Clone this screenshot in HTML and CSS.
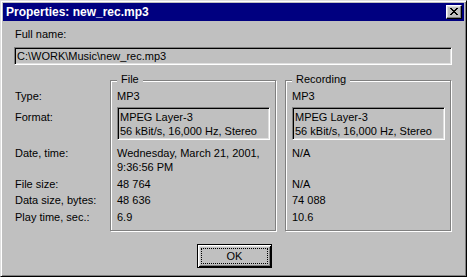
FILE: index.html
```html
<!DOCTYPE html>
<html>
<head>
<meta charset="utf-8">
<link rel="stylesheet" href="styles.css">
</head>
<body>
<div class="window">
  <div class="titlebar">
    <span class="title">Properties: new_rec.mp3</span>
    <button class="close" aria-label="Close">
      <svg class="xglyph" width="8" height="7" viewBox="0 0 8 7" shape-rendering="crispEdges">
        <rect x="0" y="0" width="2" height="1"/><rect x="6" y="0" width="2" height="1"/>
        <rect x="1" y="1" width="2" height="1"/><rect x="5" y="1" width="2" height="1"/>
        <rect x="2" y="2" width="4" height="1"/>
        <rect x="3" y="3" width="2" height="1"/>
        <rect x="2" y="4" width="4" height="1"/>
        <rect x="1" y="5" width="2" height="1"/><rect x="5" y="5" width="2" height="1"/>
        <rect x="0" y="6" width="2" height="1"/><rect x="6" y="6" width="2" height="1"/>
      </svg>
    </button>
  </div>
  <div class="content">
    <div class="fullname-label">Full name:</div>
    <div class="field">C:\WORK\Music\new_rec.mp3</div>
    <div class="form">
      <div class="labels">
        <div class="r-type">Type:</div>
        <div class="r-format lbl-format">Format:</div>
        <div class="r-date">Date, time:</div>
        <div class="r-size">File size:</div>
        <div class="r-data">Data size, bytes:</div>
        <div class="r-play">Play time, sec.:</div>
      </div>
      <div class="group">
        <span class="legend">File</span>
        <div class="r-type">MP3</div>
        <div class="r-format"><div class="box">MPEG Layer-3<br>56 kBit/s, 16,000 Hz, Stereo</div></div>
        <div class="r-date">Wednesday, March 21, 2001,<br>9:36:56 PM</div>
        <div class="r-size">48 764</div>
        <div class="r-data">48 636</div>
        <div class="r-play">6.9</div>
      </div>
      <div class="group">
        <span class="legend">Recording</span>
        <div class="r-type">MP3</div>
        <div class="r-format"><div class="box">MPEG Layer-3<br>56 kBit/s, 16,000 Hz, Stereo</div></div>
        <div class="r-date">N/A</div>
        <div class="r-size">N/A</div>
        <div class="r-data">74 088</div>
        <div class="r-play">10.6</div>
      </div>
    </div>
    <div class="actions">
      <button class="ok"><span class="focus">OK</span></button>
    </div>
  </div>
</div>
</body>
</html>
```

FILE: styles.css
```css
html, body {
  margin: 0;
  padding: 0;
  background: #c0c0c0;
}

.window {
  width: 467px;
  height: 277px;
  box-sizing: border-box;
  background: #c0c0c0;
  border: 1px solid;
  border-color: #dfdfdf #000 #000 #dfdfdf;
  box-shadow: inset 1px 1px 0 #fff, inset -1px -1px 0 #808080;
  padding: 2px;
  display: flex;
  flex-direction: column;
  font-family: "Liberation Sans", Arial, sans-serif;
  font-size: 11px;
  line-height: 14px;
  color: #000;
}

.titlebar {
  height: 18px;
  flex: none;
  background: #000080;
  color: #fff;
  display: flex;
  align-items: center;
  justify-content: space-between;
  padding: 0 2px 0 3px;
}

.title {
  font-weight: bold;
  font-size: 12px;
  line-height: 18px;
  white-space: nowrap;
}

.close {
  width: 16px;
  height: 14px;
  box-sizing: border-box;
  margin: 0;
  padding: 2px 0 0 3px;
  background: #c0c0c0;
  border: 1px solid;
  border-color: #fff #000 #000 #fff;
  box-shadow: inset -1px -1px 0 #808080, inset 1px 1px 0 #dfdfdf;
  display: flex;
  align-items: flex-start;
  justify-content: flex-start;
}

.xglyph {
  display: block;
  fill: #000;
}

.content {
  flex: 1;
  padding: 6px 12px 0 11px;
  display: flex;
  flex-direction: column;
}

.fullname-label {
  padding-left: 1px;
}

.field {
  margin-top: 6px;
  height: 18px;
  box-sizing: border-box;
  border: 1px solid;
  border-color: #808080 #fff #fff #808080;
  box-shadow: inset 1px 1px 0 #000, inset -1px -1px 0 #dfdfdf;
  padding: 1px 2px 0 2px;
  white-space: nowrap;
  background: #c0c0c0;
}

.form {
  margin-top: 15px;
  display: flex;
  align-items: flex-start;
}

.labels {
  width: 96px;
  box-sizing: border-box;
  padding-top: 9px;
  padding-left: 1px;
  white-space: nowrap;
}

.group {
  position: relative;
  width: 166px;
  box-sizing: border-box;
  border: 1px solid #808080;
  box-shadow: inset 1px 1px 0 #fff, 1px 1px 0 #fff;
  padding: 8px 5px 3px 6px;
  white-space: nowrap;
}

.group + .group {
  margin-left: 9px;
}

.legend {
  position: absolute;
  top: -9px;
  left: 6px;
  padding: 0 4px;
  background: #c0c0c0;
}

.r-type { height: 18px; }
.r-format { height: 39px; }
.r-date { height: 31px; }
.r-size { height: 16px; }
.r-data { height: 17px; }
.r-play { height: 17px; }

.lbl-format {
  box-sizing: border-box;
  padding-top: 3px;
}

.box {
  height: 33px;
  box-sizing: border-box;
  border: 1px solid;
  border-color: #808080 #fff #fff #808080;
  box-shadow: inset 1px 1px 0 #000, inset -1px -1px 0 #dfdfdf;
  padding: 2px 2px 0 2px;
}

.actions {
  display: flex;
  justify-content: center;
  padding-left: 3px;
  margin-top: 13px;
}

.ok {
  width: 75px;
  height: 24px;
  box-sizing: border-box;
  margin: 0;
  padding: 3px;
  background: #c0c0c0;
  border: 1px solid #000;
  box-shadow: inset 1px 1px 0 #fff, inset -1px -1px 0 #000, inset 2px 2px 0 #dfdfdf, inset -2px -2px 0 #808080;
  font-family: "Liberation Sans", Arial, sans-serif;
  font-size: 11px;
  line-height: 14px;
  color: #000;
  display: flex;
}

.focus {
  flex: 1;
  border: 1px dotted #000;
  display: flex;
  align-items: center;
  justify-content: center;
}
```
